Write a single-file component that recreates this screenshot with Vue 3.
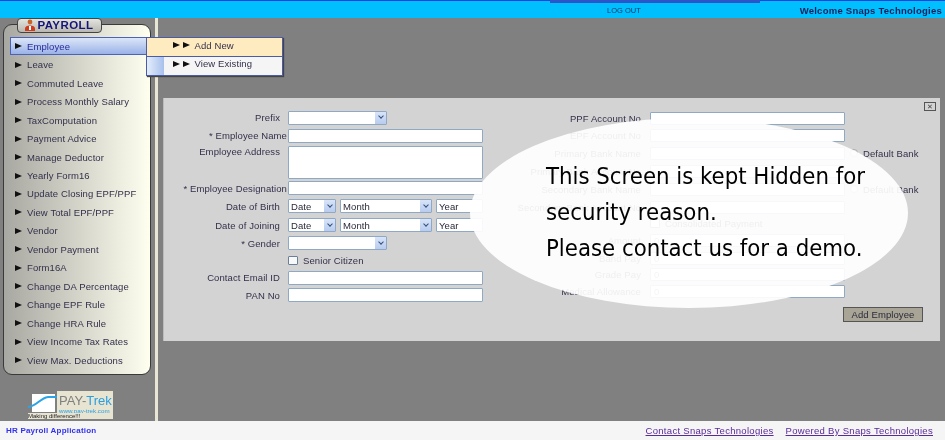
<script setup>
const menu = ['Employee','Leave','Commuted Leave','Process Monthly Salary','TaxComputation','Payment Advice','Manage Deductor','Yearly Form16','Update Closing EPF/PPF','View Total EPF/PPF','Vendor','Vendor Payment','Form16A','Change DA Percentage','Change EPF Rule','Change HRA Rule','View Income Tax Rates','View Max. Deductions']
</script>

<template>
  <div class="page">
    <header class="bar">
      <div class="strip"></div>
      <div class="topline">
        <span class="logout">LOG OUT</span>
        <span class="welcome">Welcome Snaps Technologies</span>
      </div>
    </header>

    <div class="middle">
      <aside class="side">
        <div class="panel">
          <div class="tab">
            <svg width="12" height="12" viewBox="0 0 12 12"><circle cx="6" cy="3" r="2.4" fill="#c8642a"/><path d="M1 12V9.5C1 7.5 3 6.5 6 6.5s5 1 5 3V12z" fill="#d23a1c"/><path d="M5 7h2v4H5z" fill="#fff"/></svg>
            <span>PAYROLL</span>
          </div>
          <ul class="menu">
            <li v-for="(m,i) in menu" :key="m" :class="{active:i===0}"><i class="arrow"></i>{{ m }}</li>
          </ul>
          <div class="flyout">
            <div class="fly hot"><i class="arrow"></i><i class="arrow"></i><b>Add New</b></div>
            <div class="fly plain"><span class="gut"></span><i class="arrow"></i><i class="arrow"></i><b>View Existing</b></div>
          </div>
        </div>
        <div class="logo">
          <div class="logo-mark">
            <svg width="29" height="22" viewBox="0 0 29 22"><rect width="29" height="22" fill="#808080"/><rect x="4" y="3" width="23" height="18" fill="#fff"/><path d="M0 16C8 16 12 7 20 6H29" fill="none" stroke="#2aa3e8" stroke-width="2"/></svg>
            <span class="making">Making difference!!!</span>
          </div>
          <div class="logo-text"><span class="pt">PAY-<em>Trek</em></span><span class="url">www.pay-trek.com</span></div>
        </div>
      </aside>

      <main class="content">
        <section class="dialog">
          <span class="close">✕</span>
          <div class="col left">
            <div class="row"><label>Prefix</label><span class="sel w99"></span></div>
            <div class="row"><label class="tight">* Employee Name</label><input class="fld" /></div>
            <div class="row start"><label>Employee Address</label><textarea class="fld ta"></textarea></div>
            <div class="row"><label class="tight">* Employee Designation</label><input class="fld" /></div>
            <div class="row"><label>Date of Birth</label><span class="sel w48">Date</span><span class="sel w92">Month</span><span class="sel w47 noarrow">Year</span></div>
            <div class="row"><label>Date of Joining</label><span class="sel w48">Date</span><span class="sel w92">Month</span><span class="sel w47 noarrow">Year</span></div>
            <div class="row"><label>* Gender</label><span class="sel w99"></span></div>
            <div class="row"><label></label><span class="cb"></span><span class="t">Senior Citizen</span></div>
            <div class="row"><label>Contact Email ID</label><input class="fld" /></div>
            <div class="row"><label>PAN No</label><input class="fld" /></div>
          </div>
          <div class="col rightc">
            <div class="row"><label>PPF Account No</label><input class="fld" /></div>
            <div class="row"><label>EPF Account No</label><input class="fld" /></div>
            <div class="row"><label>Primary Bank Name</label><input class="fld" /><span class="rad"></span><span class="t">Default Bank</span></div>
            <div class="row"><label>Primary Bank Account No</label><input class="fld" /></div>
            <div class="row"><label>Secondary Bank Name</label><input class="fld" /><span class="rad"></span><span class="t">Default Bank</span></div>
            <div class="row"><label>Secondary Bank Account No</label><input class="fld" /></div>
            <div class="row"><label></label><span class="cb"></span><span class="t">Consolidated Payment</span></div>
            <div class="row"><label>Amount</label><input class="fld" value="0" /></div>
            <div class="row"><label>Band Pay</label><input class="fld" value="0" /></div>
            <div class="row"><label>Grade Pay</label><input class="fld" value="0" /></div>
            <div class="row"><label>Medical Allowance</label><input class="fld" value="0" /></div>
            <button>Add Employee</button>
          </div>
        </section>
        <div class="oval">
          <p>This Screen is kept Hidden for</p>
          <p>security reason.</p>
          <p>Please contact us for a demo.</p>
        </div>
      </main>
    </div>

    <footer class="foot">
      <span class="app">HR Payroll Application</span>
      <span class="links"><a>Contact Snaps Technologies</a><a>Powered By Snaps Technologies</a></span>
    </footer>
  </div>
</template>

<style>
html, body { margin: 0; background: #f5f5f5; overflow: hidden; }
</style>

<style scoped>
.page { width: 945px; height: 440px; display: flex; flex-direction: column; font-family: "Liberation Sans", Arial, sans-serif; font-size: 9.5px; color: #33304a; letter-spacing: .1px; overflow: hidden; filter: blur(.3px); }

.bar { height: 18px; background: #00bfff; flex: none; position: relative; }
.strip { height: 1px; background: #1a3fe0; }
.bar::after { content: ""; position: absolute; left: 550px; top: 0; width: 210px; height: 3px; background: #2b55c8; }
.topline { display: flex; justify-content: space-between; align-items: center; height: 17px; padding: 2px 3px 0 607px; box-sizing: border-box; }
.logout { font-size: 7.5px; color: #123a6a; letter-spacing: 0; }
.welcome { font-weight: bold; font-size: 9.5px; color: #10205a; letter-spacing: .25px; }

.middle { height: 403px; display: flex; background: #808080; flex: none; position: relative; }
.side { width: 155px; flex: none; border-right: 3px solid #e8e6d4; padding-top: 6px; display: flex; flex-direction: column; }
.panel { margin: 0 4px 0 3px; height: 351px; box-sizing: border-box; border: 1.5px solid #3a3a3a; border-radius: 9px; background: linear-gradient(90deg, #a8a8a2, #fffff0); position: relative; padding-top: 12px; }
.tab { position: absolute; left: 12.5px; top: -7.5px; width: 85px; height: 15px; box-sizing: border-box; border: 1px solid #444; border-radius: 4px; background: linear-gradient(#e4e4e0, #b8b8b0); display: flex; align-items: center; gap: 2px; padding-left: 6px; font: bold 11.5px "Liberation Sans", sans-serif; letter-spacing: .4px; color: #14147a; }
.menu { list-style: none; margin: 0; padding: 0; }
.menu li { height: 18.47px; display: flex; align-items: center; padding-left: 11px; box-sizing: border-box; white-space: nowrap; }
.menu li.active { margin-left: 5.5px; padding-left: 4.5px; width: 137px; border: 1px solid #4a63b8; background: linear-gradient(#dce6f8, #9ab2e8); color: #2a2a9a; height: 18px; margin-bottom: .47px; }
.arrow { display: inline-block; flex: none; width: 0; height: 0; border-left: 7px solid #111; border-top: 3px solid transparent; border-bottom: 3px solid transparent; margin-right: 5px; }

.flyout { position: absolute; left: 141.5px; top: 11.5px; width: 137px; height: 39px; box-sizing: border-box; border: 1px solid #4a5ba8; background: #f5f5f5; z-index: 2; box-shadow: 1px 1px 1px #444; }
.fly { display: flex; align-items: center; position: relative; padding-left: 26px; box-sizing: border-box; }
.fly.hot { height: 19px; background: #ffebc0; border-bottom: 1px solid #4a5ba8; padding-bottom: 3px; }
.fly.plain { height: 18px; padding-bottom: 4px; }
.fly .arrow { margin-right: 3px; }
.fly b { font-weight: normal; margin-left: 2px; }
.gut { position: absolute; left: 0; top: 0; bottom: 0; width: 17px; background: linear-gradient(90deg, #e4edfa, #a8c0ec); }

.logo { display: flex; margin: 16px 0 0 28px; width: 85px; height: 28px; background: #e8e4d2; }
.logo-mark { width: 29px; flex: none; position: relative; background: #808080; }
.logo-mark svg { display: block; }
.making { position: absolute; left: 0; bottom: 0; width: 55px; height: 6px; background: #e8e4d2; font-size: 6px; line-height: 6px; color: #222; letter-spacing: 0; white-space: nowrap; overflow: hidden; z-index: 1; }
.logo-text { display: flex; flex-direction: column; width: 56px; padding-left: 2px; box-sizing: border-box; }
.pt { font-size: 13px; line-height: 13px; color: #808080; letter-spacing: 0; margin-top: 3px; white-space: nowrap; }
.pt em { font-style: normal; color: #2a9fe0; }
.url { font-size: 6.2px; color: #2a9fe0; letter-spacing: 0; line-height: 7px; white-space: nowrap; }

.content { flex: 1; position: relative; padding: 80px 5px 0; }
.dialog { height: 243px; background: #d3d3d3; box-shadow: inset 1px 0 #bbb; position: relative; display: flex; }
.close { position: absolute; left: 761px; top: 4px; width: 12px; height: 9px; box-sizing: border-box; border: 1px solid #555; font-size: 7px; line-height: 7px; text-align: center; color: #444; letter-spacing: 0; }

.col { display: grid; justify-content: start; }
.col.left { width: 321px; padding-top: 10px; grid-template-rows: 19px 17px 36px 16px 20px 18px 18px 17px 17px 18px; align-content: start; }
.col.rightc { flex: 1; padding-top: 11px; grid-template-rows: 18px 17px 18px 18px 18px 18px 14px 20px 16px 16px 18px auto; align-content: start; }
.row { display: flex; align-items: center; gap: 4px; }
.row.start { align-items: flex-start; }
.row.start label { padding-top: 2px; }
label { width: 117px; margin-right: 4px; text-align: right; flex: none; white-space: nowrap; }
label.tight { width: 124px; margin-right: -3px; }
.rightc label { width: 157px; margin-right: 5px; }

.fld { width: 195px; height: 14px; box-sizing: border-box; border: 1px solid #8fa8c4; background: #fff; padding: 0 3px; font: 9.5px "Liberation Sans", sans-serif; color: #777; margin: 0; outline: none; display: block; border-radius: 1px; }
.rightc .fld { height: 13px; }
.ta { height: 33px; resize: none; margin-top: 2px; }
.sel { height: 14px; box-sizing: border-box; border: 1px solid #8fa8c4; background: #fff; display: flex; align-items: center; padding-left: 2px; position: relative; border-radius: 1px; color: #2a2a3a; }
.sel::after { content: ""; position: absolute; right: 0; top: 0; bottom: 0; width: 11px; background: linear-gradient(#d8e4f8, #b8ccf0); }
.sel::before { content: ""; position: absolute; right: 3.5px; top: 2.5px; width: 3px; height: 3px; border-right: 1.5px solid #33507a; border-bottom: 1.5px solid #33507a; transform: rotate(45deg); z-index: 1; }
.noarrow::after, .noarrow::before { display: none; }
.w99 { width: 99px; } .w48 { width: 48px; } .w47 { width: 47px; } .w92 { width: 92px; }
.cb { width: 10px; height: 9px; box-sizing: border-box; border: 1px solid #6a7f99; background: #f8f8f8; margin-right: 1px; border-radius: 1px; }
.rad { width: 8px; height: 8px; box-sizing: border-box; border: 1px solid #aaa; border-radius: 50%; background: #eee; margin-left: 1px; }
.t { white-space: nowrap; }
.rad + .t { margin-left: 1px; }

button { margin: 7px 0 0 359px; width: 80px; height: 15px; box-sizing: border-box; border: 1px solid #555; background: #a8a496; font: 9.5px "Liberation Sans", sans-serif; letter-spacing: .1px; color: #2a2a3a; padding: 0; }

.oval { position: absolute; left: 312px; top: 100px; width: 438px; height: 190px; border-radius: 50%; background: rgba(255,255,255,.92); box-sizing: border-box; padding: 40px 0 0 76px; font: 23.7px/36px "DejaVu Sans Condensed", "Noto Sans", sans-serif; color: #000; letter-spacing: 0; }
.oval p { margin: 0; white-space: nowrap; }

.foot { flex: 1; background: #f5f5f5; display: flex; justify-content: space-between; align-items: center; padding: 0 12px 0 6px; }
.app { font-weight: bold; font-size: 8px; color: #3232ee; letter-spacing: .2px; }
.links { display: flex; gap: 12px; }
.links a { color: #5a2a9a; text-decoration: underline; font-size: 9.5px; letter-spacing: .3px; }
</style>
